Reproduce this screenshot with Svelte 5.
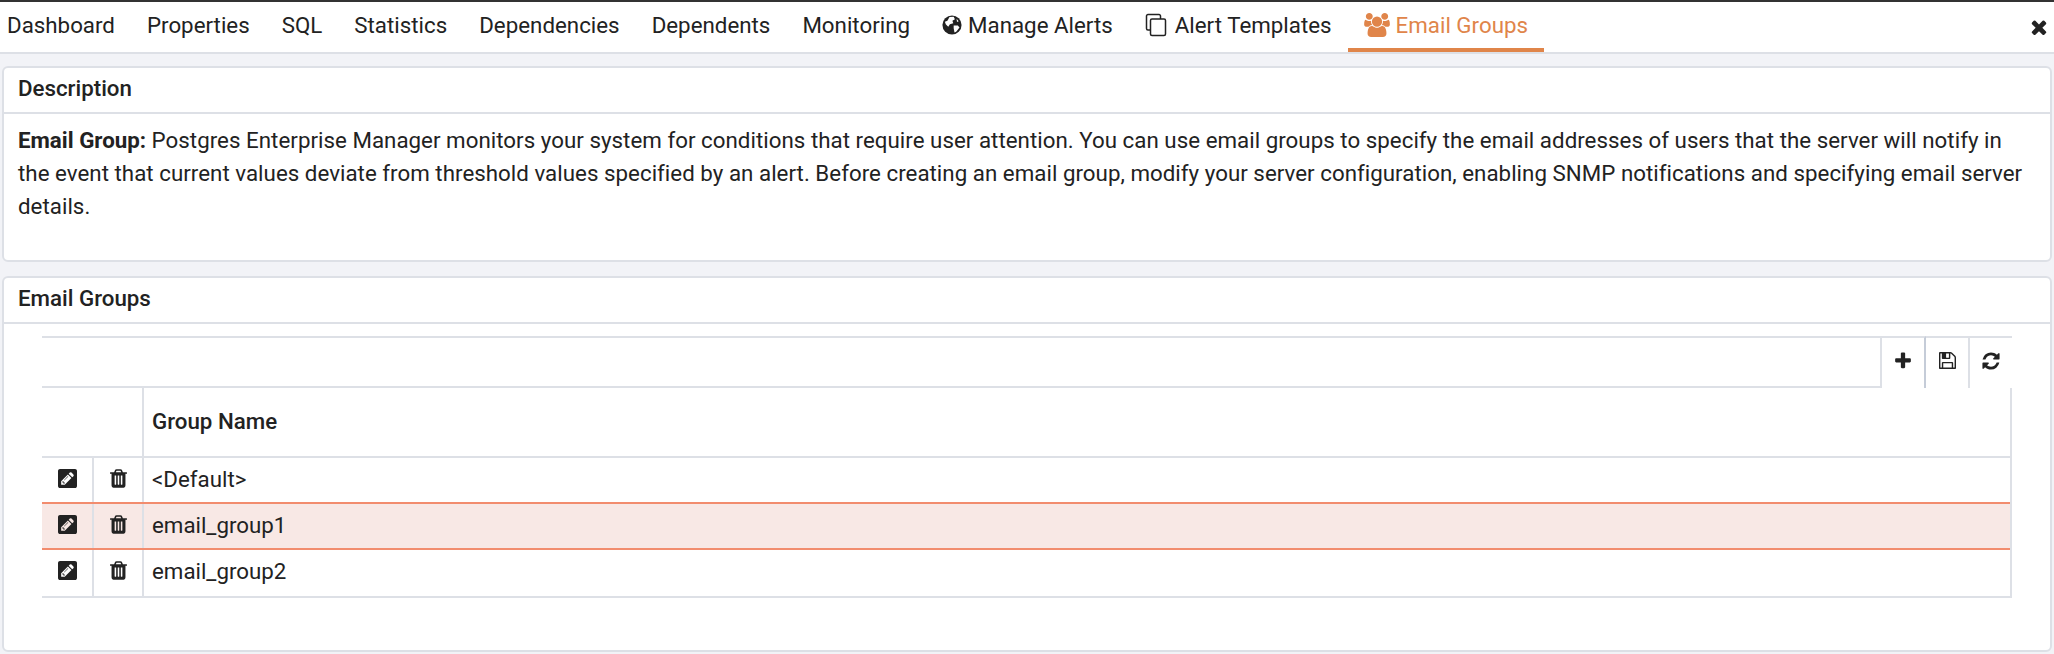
<script>
  const tabs = ['Dashboard', 'Properties', 'SQL', 'Statistics', 'Dependencies', 'Dependents', 'Monitoring'];

  const groups = [
    { name: '<Default>', selected: false },
    { name: 'email_group1', selected: true },
    { name: 'email_group2', selected: false }
  ];

  const pencil = 'M404 980l152 152-52 52h-56v-96h-96v-56zm414-390q14 13-3 30l-291 291q-17 17-30 3-14-13 3-30l291-291q17-17 30-3zm-274 690l544-544-288-288-544 544v288h288zm608-608l92-92q28-28 28-68t-28-68l-152-152q-28-28-68-28t-68 28l-92 92zM1536 160v1216q0 66-47 113t-113 47H160q-66 0-113-47t-47-113V160q0-66 47-113t113-47h1216q66 0 113 47t47 113z';
  const trash = 'M704 1376v-704q0-14-9-23t-23-9h-64q-14 0-23 9t-9 23v704q0 14 9 23t23 9h64q14 0 23-9t9-23zm256 0v-704q0-14-9-23t-23-9h-64q-14 0-23 9t-9 23v704q0 14 9 23t23 9h64q14 0 23-9t9-23zm256 0v-704q0-14-9-23t-23-9h-64q-14 0-23 9t-9 23v704q0 14 9 23t23 9h64q14 0 23-9t9-23zm-544-992h448l-48-117q-7-9-17-11h-317q-10 2-17 11zm928 32v64q0 14-9 23t-23 9h-96v948q0 83-47 143.500t-113 60.500h-832q-66 0-113-58.500t-47-141.500v-952h-96q-14 0-23-9t-9-23v-64q0-14 9-23t23-9h309l70-167q15-37 54-63t79-26h320q40 0 79 26t54 63l70 167h309q14 0 23 9t9 23z';
</script>

<div class="page">
  <nav class="tabs">
    {#each tabs as tab}
      <span class="tab">{tab}</span>
    {/each}
    <span class="tab">
      <svg class="ico globe" viewBox="0 0 24 24">
        <circle cx="12" cy="12" r="11.500" fill="#222" />
        <path d="M9 2.500l5-.5 1.500 3-3 2 1 3-4 1-2 3-3-3-1-3 3-1zM14 12.500l5 0 2 2.500-4 5-2 1-1-5zM17.500 4.500l2.500 3-2 1z" fill="#fff" />
      </svg>
      Manage Alerts
    </span>
    <span class="tab">
      <svg class="ico files" viewBox="0 0 24 24" fill="none" stroke="#222" stroke-width="1.500">
        <path d="M5 17H3A1.500 1.500 0 0 1 1.500 15.500V3A1.500 1.500 0 0 1 3 1.500h11A1.500 1.500 0 0 1 15.500 3V6" />
        <rect x="5.500" y="6" width="15" height="16.500" rx="1.500" />
      </svg>
      Alert Templates
    </span>
    <span class="tab active">
      <svg class="ico users" viewBox="0 0 1920 1792">
        <path fill="currentColor" d="M593 896q-162 5-265 128h-134q-82 0-138-40.500t-56-118.500q0-353 124-353 6 0 43.500 21t97.500 42.500 119 21.500q67 0 133-23-5 37-5 66 0 139 81 256zm1071 637q0 120-73 189.500t-194 69.500h-874q-121 0-194-69.500t-73-189.500q0-53 3.500-103.500t14-109 26.500-108.500 43-97.500 62-81 85.500-53.500 111.500-20q10 0 43 21.500t73 48 107 48 135 21.500 135-21.500 107-48 73-48 43-21.500q61 0 111.500 20t85.500 53.500 62 81 43 97.500 26.500 108.500 14 109 3.500 103.500zm-1024-1277q0 106-75 181t-181 75-181-75-75-181 75-181 181-75 181 75 75 181zm704 384q0 159-112.500 271.500t-271.500 112.500-271.500-112.500-112.500-271.500 112.500-271.500 271.500-112.500 271.500 112.500 112.500 271.500zm576 225q0 78-56 118.500t-138 40.500h-134q-103-123-265-128 81-117 81-256 0-29-5-66 66 23 133 23 59 0 119-21.500t97.500-42.500 43.500-21q124 0 124 353zm-128-609q0 106-75 181t-181 75-181-75-75-181 75-181 181-75 181 75 75 181z" />
      </svg>
      Email Groups
    </span>
    <svg class="close" viewBox="0 0 1408 1792">
      <path fill="#222" d="M1298 1322q0 40-28 68l-136 136q-28 28-68 28t-68-28l-294-294-294 294q-28 28-68 28t-68-28l-136-136q-28-28-28-68t28-68l294-294-294-294q-28-28-28-68t28-68l136-136q28-28 68-28t68 28l294 294 294-294q28-28 68-28t68 28l136 136q28 28 28 68t-28 68l-294 294 294 294q28 28 28 68z" />
    </svg>
  </nav>

  <section class="card description">
    <h2>Description</h2>
    <p>
      <b>Email Group:</b> Postgres Enterprise Manager monitors your system for conditions that require user attention. You can use email groups to specify the email addresses of users that the server will notify in the event that current values deviate from threshold values specified by an alert. Before creating an email group, modify your server configuration, enabling SNMP notifications and specifying email server details.
    </p>
  </section>

  <section class="card groups">
    <h2>Email Groups</h2>
    <div class="grid-wrap">
      <div class="toolbar">
        <div class="spacer"></div>
        <button aria-label="Add">
          <svg viewBox="0 0 1792 1792"><path fill="#222" d="M1600 736v192q0 40-28 68t-68 28h-416v416q0 40-28 68t-68 28h-192q-40 0-68-28t-28-68v-416h-416q-40 0-68-28t-28-68v-192q0-40 28-68t68-28h416v-416q0-40 28-68t68-28h192q40 0 68 28t28 68v416h416q40 0 68 28t28 68z" /></svg>
        </button>
        <button aria-label="Save">
          <svg class="save" viewBox="128 128 1536 1536"><path fill="#222" d="M512 1536h768v-384h-768v384zm896 0h128v-896q0-14-10-38.500t-20-34.500l-281-281q-10-10-34-20t-39-10v416q0 40-28 68t-68 28h-576q-40 0-68-28t-28-68v-416h-128v1280h128v-416q0-40 28-68t68-28h832q40 0 68 28t28 68v416zm-384-928v-320q0-13-9.500-22.500t-22.500-9.500h-192q-13 0-22.500 9.500t-9.500 22.500v320q0 13 9.500 22.500t22.500 9.500h192q13 0 22.500-9.500t9.500-22.500zm640 32v928q0 40-28 68t-68 28h-1344q-40 0-68-28t-28-68v-1344q0-40 28-68t68-28h928q40 0 88 20t76 48l280 280q28 28 48 76t20 88z" /></svg>
        </button>
        <button aria-label="Refresh">
          <svg viewBox="0 0 1792 1792"><path fill="#222" d="M1639 1056q0 5-1 7-64 268-268 434.500t-478 166.500q-146 0-282.500-55t-243.500-157l-129 129q-19 19-45 19t-45-19-19-45v-448q0-26 19-45t45-19h448q26 0 45 19t19 45-19 45l-137 137q71 66 161 102t187 36q134 0 250-65t186-179q11-17 53-117 8-23 30-23h192q13 0 22.500 9.500t9.500 22.500zm25-800v448q0 26-19 45t-45 19h-448q-26 0-45-19t-19-45 19-45l138-138q-148-137-349-137-134 0-250 65t-186 179q-11 17-53 117-8 23-30 23h-199q-13 0-22.500-9.500t-9.500-22.500v-7q65-268 270-434.500t480-166.500q146 0 284 55.500t245 156.500l130-129q19-19 45-19t45 19 19 45z" /></svg>
        </button>
      </div>
      <div class="table">
        <div class="row head">
          <div class="cell icons"></div>
          <div class="cell name">Group Name</div>
        </div>
        {#each groups as group}
          <div class="row" class:selected={group.selected}>
            <div class="cell btn">
              <svg class="edit" viewBox="0 0 1536 1536"><path fill="#222" fill-rule="evenodd" d={pencil} /></svg>
            </div>
            <div class="cell btn second">
              <svg class="trash" viewBox="192 128 1408 1536"><path fill="#222" d={trash} /></svg>
            </div>
            <div class="cell name">{group.name}</div>
          </div>
        {/each}
      </div>
    </div>
  </section>
</div>

<style>
  :global(body) {
    margin: 0;
    background: #f2f3f7;
  }

  .page {
    height: 654px;
    box-sizing: border-box;
    border-top: 2px solid #333;
    font-family: Roboto, sans-serif;
    font-size: 22.3px;
    color: #222;
    overflow: hidden;
  }

  .tabs {
    display: flex;
    height: 52px;
    box-sizing: border-box;
    background: #fff;
    border-bottom: 2px solid #dde0e6;
    position: relative;
    letter-spacing: 0.012px;
  }

  .tab {
    display: flex;
    align-items: center;
    gap: 6px;
    padding: 0 16px 4px;
    height: 50px;
    box-sizing: border-box;
    white-space: nowrap;
  }

  .tab:first-child {
    padding-left: 7px;
  }

  .tab.active {
    color: #e0854a;
    border-bottom: 4px solid #e0854a;
    padding-bottom: 0;
  }

  .ico {
    flex: none;
  }

  .globe {
    width: 20px;
    height: 20px;
  }

  .files {
    width: 24px;
    height: 24px;
  }

  .users {
    width: 26px;
    height: 24px;
  }

  .close {
    position: absolute;
    right: 6px;
    top: 14px;
    width: 18px;
    height: 22px;
  }

  .card {
    background: #fff;
    border: 2px solid #dde0e6;
    border-radius: 6px;
    margin: 12px 2px 0;
    box-sizing: border-box;
  }

  h2 {
    margin: 0;
    font-size: 22.3px;
    font-weight: 500;
    height: 46px;
    line-height: 40px;
    padding-left: 14px;
    box-sizing: border-box;
    border-bottom: 2px solid #dde0e6;
  }

  .description {
    height: 196px;
  }

  .description p {
    margin: 0;
    padding: 10px 16px 10px 14px;
    line-height: 33px;
    letter-spacing: 0.03px;
  }

  .description b {
    font-weight: 700;
    letter-spacing: 0;
  }

  .groups {
    height: 376px;
    margin-top: 14px;
  }

  .grid-wrap {
    margin: 12px 38px 0 38px;
  }

  .toolbar {
    display: flex;
    height: 52px;
  }

  .spacer {
    flex: 1;
    border-top: 2px solid #dde0e6;
    border-bottom: 2px solid #dde0e6;
    border-right: 2px solid #dde0e6;
  }

  .toolbar button {
    width: 44px;
    padding: 0 0 5px;
    border: 0;
    border-top: 2px solid #dde0e6;
    border-right: 2px solid #dde0e6;
    background: #fff;
    display: flex;
    align-items: center;
    justify-content: center;
  }

  .toolbar button:nth-child(2) {
    border-right-color: #c5ccd8;
  }

  .toolbar button:last-child {
    border-right: 0;
    width: 42px;
  }

  .toolbar svg {
    width: 20px;
    height: 20px;
  }

  .toolbar svg.save {
    width: 17px;
    height: 17px;
  }

  .table {
    border-right: 2px solid #dde0e6;
    border-bottom: 2px solid #dde0e6;
  }

  .row {
    display: flex;
    height: 46px;
    border-bottom: 2px solid #dde0e6;
    box-sizing: border-box;
  }

  .row:last-child {
    border-bottom: 0;
  }

  .row:last-child .cell {
    padding-bottom: 5px;
  }

  .row.head {
    height: 70px;
    font-weight: 500;
  }

  .row.selected {
    background: #f8e8e5;
    border-top: 2px solid #f28c6e;
    border-bottom: 2px solid #f28c6e;
    margin-top: -2px;
    height: 48px;
  }

  .cell {
    display: flex;
    align-items: center;
    box-sizing: border-box;
    padding-bottom: 3px;
  }

  .icons {
    width: 102px;
    border-right: 2px solid #dde0e6;
    flex: none;
  }

  .btn {
    width: 52px;
    flex: none;
    justify-content: center;
    border-right: 2px solid #dde0e6;
  }

  .btn.second {
    width: 50px;
  }

  .name {
    flex: 1;
    padding-left: 8px;
  }

  .edit {
    width: 19px;
    height: 19px;
  }

  .trash {
    width: 17px;
    height: 19px;
  }
</style>
